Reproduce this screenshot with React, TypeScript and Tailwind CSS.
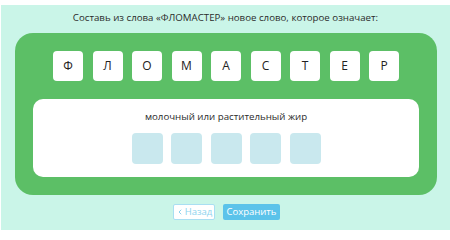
import { ChevronLeft } from "lucide-react";

const letters = ["Ф", "Л", "О", "М", "А", "С", "Т", "Е", "Р"];

export default function App() {
  return (
    <div className="h-[231px] w-[450px] bg-white pt-[5px] pl-px font-['Open_Sans',sans-serif]">
      <div className="flex h-[225px] flex-col bg-[#caf5e8]">
        <p className="mt-[5px] h-[16px] text-center text-[9.7px] leading-[16px] text-[#2b2b2b]">
          Составь из слова «ФЛОМАСТЕР» новое слово, которое означает:
        </p>
        <div className="ml-[14px] mt-[7px] flex w-[422px] flex-col gap-[18px] rounded-[18px] bg-[#5cbf66] p-[18px]">
          <div className="flex justify-center gap-[9.5px]">
            {letters.map((l, i) => (
              <div
                key={i}
                className="flex h-[30px] w-[30px] items-center justify-center rounded-[4px] bg-white text-[12px] text-[#222]"
              >
                {l}
              </div>
            ))}
          </div>
          <div className="flex h-[78px] flex-col items-center rounded-[10px] bg-white pt-[11px]">
            <p className="text-[9.7px] leading-[14px] text-[#2b2b2b]">молочный или растительный жир</p>
            <div className="mt-[9px] flex gap-[8.5px]">
              {[0, 1, 2, 3, 4].map((i) => (
                <div key={i} className="h-[31px] w-[31px] rounded-[4px] bg-[#c9e8ee]" />
              ))}
            </div>
          </div>
        </div>
        <div className="mt-[9px] flex justify-center gap-[8px] pl-[2px]">
          <button className="flex h-[16px] w-[42px] items-center justify-center gap-[1px] rounded-[2px] border border-[#a9dff2] bg-white text-[9.5px] text-[#8dd3ee]">
            <ChevronLeft className="h-[8px] w-[8px]" strokeWidth={3} />
            Назад
          </button>
          <button className="flex h-[16px] w-[57px] items-center justify-center rounded-[2px] bg-[#5bc3ea] text-[9.5px] text-white">
            Сохранить
          </button>
        </div>
      </div>
    </div>
  );
}
